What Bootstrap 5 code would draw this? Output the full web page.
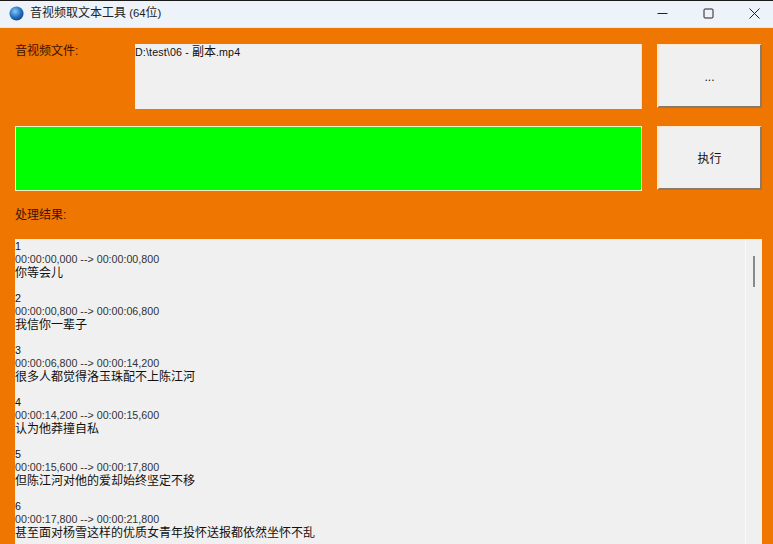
<!DOCTYPE html>
<html lang="zh">
<head>
<meta charset="utf-8">
<title>音视频取文本工具</title>
<link rel="stylesheet" href="https://cdn.jsdelivr.net/npm/bootstrap@5.3.0/dist/css/bootstrap.min.css">
<style>
html, body { height: 544px; overflow: hidden; }
body { background: #ef7600; font-family: "Liberation Sans", "Noto Sans CJK SC", sans-serif; color: #111; }
.win-title { height: 28px; background: #eef3fa; border-top: 1px solid #1a1a1a; border-bottom: 1px solid #fbe3c4; font-size: 12px; color: #222; padding: 0 0 2px 9px; }
.win-name { margin-left: 6px; }
.title-lat { font-size: 11.3px; }
.win-ctrls { margin-left: auto; }
.win-btn { width: 45px; height: 24px; }
.win-btn:nth-child(2) { width: 46px; }
.win-btn:last-child { width: 38px; margin-left: 4px; }
.app-main { padding: 16px 11px 0 15px; display: grid; grid-template-columns: 120px 507px 120px; }
.cjk-text { font-size: 12px; line-height: 13px; }
.lat-text { font-size: 10.7px; line-height: 13px; }
.path-text { letter-spacing: .13px; }
.field-label { color: #3d1200; padding-top: 1px; line-height: 13px; font-size: 12px; }
.file-box { height: 65px; background: #f0f0f0; line-height: 13px; color: #111; border-right: 1px solid #fbdcb8; }
.win-push { width: 105px; height: 64px; margin-left: 15px; background: #f0f0f0; border: 0; border-top: 1px solid #fde8cf; border-left: 2px solid #fde8cf; border-right: 2px solid #8c7a66; border-bottom: 2px solid #8c7a66; font-size: 12px; color: #111; padding: 3px 0 0; border-radius: 0; }
.result-wrap { padding: 0 11px 0 15px; }
.progress-row { margin-top: 17px; display: grid; grid-template-columns: 627px 120px; }
.green-bar { height: 65px; background: #00ff00; border: 1px solid #f5f5c8; }
.result-label { margin-top: 16px; height: 14px; margin-bottom: 18px; padding-top: 2px; }
.result-area { height: 305px; background: #f0f0f0; overflow: hidden; }
.result-text { padding-top: 1px; min-width: 0; }
.result-text div { height: 13px; white-space: nowrap; }
.result-text .cjk-text { line-height: 15px; }
.time-line { color: #333; }
.v-scroll { width: 17px; background: #f0f0f0; border-left: 1px solid #fafafa; padding-top: 17px; }
.v-thumb { width: 2px; height: 31px; background: #8a8a8a; margin-left: 7px; }
</style>
</head>
<body>
<div class="win-title d-flex align-items-center">
  <svg width="15" height="15" viewBox="0 0 16 16"><defs><radialGradient id="g" cx="40%" cy="35%" r="70%"><stop offset="0" stop-color="#8cc6f2"/><stop offset="0.55" stop-color="#2a78c8"/><stop offset="1" stop-color="#123f80"/></radialGradient></defs><circle cx="8" cy="8" r="7.5" fill="url(#g)"/></svg>
  <span class="win-name">音视频取文本工具<span class="title-lat"> (64</span>位<span class="title-lat">)</span></span>
  <div class="win-ctrls d-flex">
    <div class="win-btn d-flex align-items-center justify-content-center"><svg width="11" height="11" viewBox="0 0 11 11"><path d="M0.5 5.5H10.5" stroke="#222" stroke-width="1"/></svg></div>
    <div class="win-btn d-flex align-items-center justify-content-center"><svg width="11" height="11" viewBox="0 0 11 11"><rect x="1" y="1" width="9" height="9" rx="1" fill="none" stroke="#222"/></svg></div>
    <div class="win-btn d-flex align-items-center justify-content-center"><svg width="11" height="11" viewBox="0 0 11 11"><path d="M0.5 0.5L10.5 10.5M10.5 0.5L0.5 10.5" stroke="#222"/></svg></div>
  </div>
</div>
<div class="app-main">
  <div class="field-label">音视频文件:</div>
  <div class="file-box"><span class="lat-text path-text">D:\test\06 - </span><span class="cjk-text">副本</span><span class="lat-text path-text">.mp4</span></div>
  <button type="button" class="win-push btn">...</button>
</div>
<div class="result-wrap">
  <div class="progress-row">
    <div class="green-bar"></div>
    <button type="button" class="win-push btn">执行</button>
  </div>
  <div class="result-label field-label">处理结果:</div>
  <div class="result-area d-flex">
    <div class="result-text flex-grow-1">
      <div class="lat-text">1</div><div class="lat-text time-line">00:00:00,000 --&gt; 00:00:00,800</div><div class="cjk-text">你等会儿</div><div></div>
      <div class="lat-text">2</div><div class="lat-text time-line">00:00:00,800 --&gt; 00:00:06,800</div><div class="cjk-text">我信你一辈子</div><div></div>
      <div class="lat-text">3</div><div class="lat-text time-line">00:00:06,800 --&gt; 00:00:14,200</div><div class="cjk-text">很多人都觉得洛玉珠配不上陈江河</div><div></div>
      <div class="lat-text">4</div><div class="lat-text time-line">00:00:14,200 --&gt; 00:00:15,600</div><div class="cjk-text">认为他莽撞自私</div><div></div>
      <div class="lat-text">5</div><div class="lat-text time-line">00:00:15,600 --&gt; 00:00:17,800</div><div class="cjk-text">但陈江河对他的爱却始终坚定不移</div><div></div>
      <div class="lat-text">6</div><div class="lat-text time-line">00:00:17,800 --&gt; 00:00:21,800</div><div class="cjk-text">甚至面对杨雪这样的优质女青年投怀送报都依然坐怀不乱</div>
    </div>
    <div class="v-scroll"><div class="v-thumb"></div></div>
  </div>
</div>
</body>
</html>
